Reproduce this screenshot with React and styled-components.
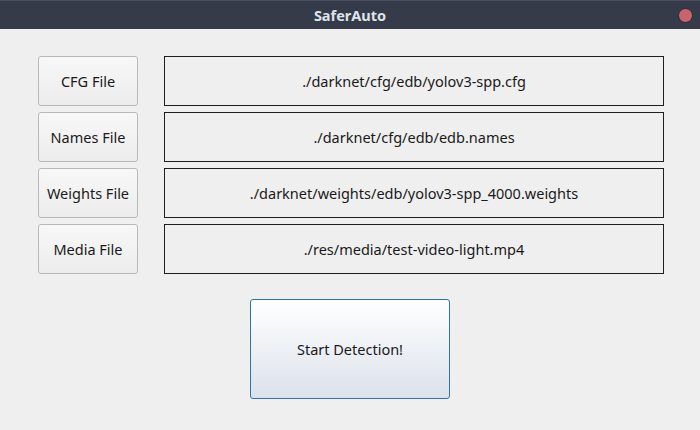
import React from "react";
import styled, { createGlobalStyle } from "styled-components";

const Global = createGlobalStyle`
  html, body { margin: 0; padding: 0; background: #efefef; }
  body { font-family: "Noto Sans", "Open Sans", sans-serif; }
`;

const Window = styled.div`
  width: 700px;
  height: 430px;
  display: flex;
  flex-direction: column;
  background: #efefef;
  overflow: hidden;
`;

const TitleBar = styled.div`
  height: 29px;
  flex: none;
  background: #353b48;
  border-top: 1px solid #4a5060;
  box-sizing: border-box;
  display: flex;
  align-items: center;
  justify-content: center;
  position: relative;
  color: #dfe3ea;
  font-weight: 700;
  font-size: 14.5px;
`;

const CloseDot = styled.span`
  position: absolute;
  right: 7px;
  top: 7px;
  width: 13px;
  height: 13px;
  border-radius: 50%;
  background: #c9636c;
  border: 1px solid #272b35;
`;

const Body = styled.div`
  display: flex;
  flex-direction: column;
  padding: 27px 36px 0 38px;
  gap: 6px;
`;

const Row = styled.div`
  display: flex;
  gap: 26px;
  height: 50px;
`;

const FileButton = styled.button`
  width: 100px;
  height: 50px;
  box-sizing: border-box;
  border: 1px solid #b9b9b9;
  border-radius: 3px;
  background: linear-gradient(#f8f8f8, #ececec);
  font-family: inherit;
  font-size: 14.5px;
  color: #1a1a1a;
  padding: 0;
`;

const PathField = styled.div`
  flex: 1;
  box-sizing: border-box;
  border: 1px solid #1e1e1e;
  display: flex;
  align-items: center;
  justify-content: center;
  font-size: 14.5px;
  color: #1a1a1a;
`;

const StartWrap = styled.div`
  display: flex;
  justify-content: center;
  padding-top: 25px;
`;

const StartButton = styled.button`
  width: 200px;
  height: 100px;
  box-sizing: border-box;
  border: 1px solid #2f74a8;
  border-radius: 3px;
  background: linear-gradient(#ffffff, #dbe2ea);
  font-family: inherit;
  font-size: 14.5px;
  color: #1a1a1a;
`;

const rows = [
  ["CFG File", "./darknet/cfg/edb/yolov3-spp.cfg"],
  ["Names File", "./darknet/cfg/edb/edb.names"],
  ["Weights File", "./darknet/weights/edb/yolov3-spp_4000.weights"],
  ["Media File", "./res/media/test-video-light.mp4"],
];

export default function App() {
  return (
    <>
      <Global />
      <Window>
        <TitleBar>
          SaferAuto
          <CloseDot />
        </TitleBar>
        <Body>
          {rows.map(([label, path]) => (
            <Row key={label}>
              <FileButton>{label}</FileButton>
              <PathField>{path}</PathField>
            </Row>
          ))}
        </Body>
        <StartWrap>
          <StartButton>Start Detection!</StartButton>
        </StartWrap>
      </Window>
    </>
  );
}
